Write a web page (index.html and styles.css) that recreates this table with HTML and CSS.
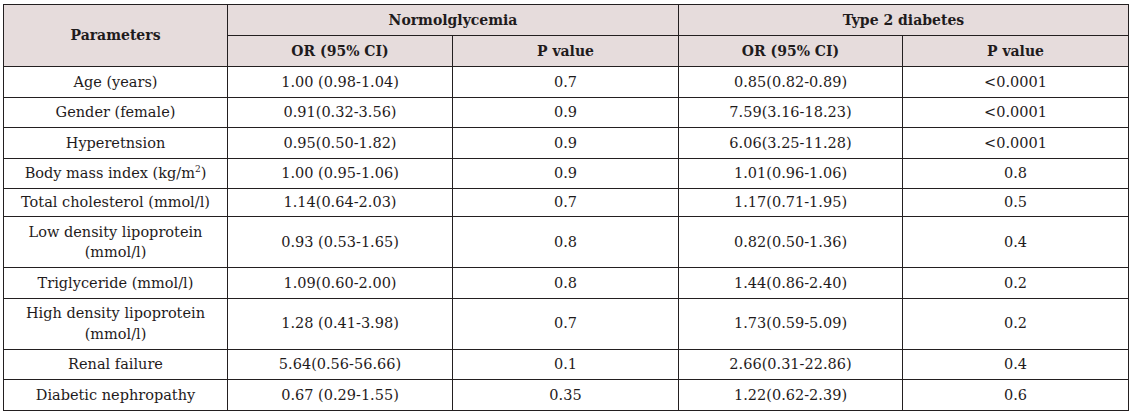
FILE: index.html
```html
<!DOCTYPE html>
<html lang="en">
<head>
<meta charset="utf-8">
<title>Odds ratios</title>
<link rel="stylesheet" href="styles.css">
</head>
<body>
<table class="data">
  <colgroup>
    <col class="c1"><col class="c2"><col class="c3"><col class="c4"><col class="c5">
  </colgroup>
  <thead>
    <tr class="h1">
      <th rowspan="2">Parameters</th>
      <th colspan="2">Normolglycemia</th>
      <th colspan="2">Type 2 diabetes</th>
    </tr>
    <tr class="h2">
      <th>OR (95% CI)</th>
      <th>P value</th>
      <th>OR (95% CI)</th>
      <th>P value</th>
    </tr>
  </thead>
  <tbody>
    <tr><td>Age (years)</td><td>1.00 (0.98-1.04)</td><td>0.7</td><td>0.85(0.82-0.89)</td><td>&lt;0.0001</td></tr>
    <tr><td>Gender (female)</td><td>0.91(0.32-3.56)</td><td>0.9</td><td>7.59(3.16-18.23)</td><td>&lt;0.0001</td></tr>
    <tr><td>Hyperetnsion</td><td>0.95(0.50-1.82)</td><td>0.9</td><td>6.06(3.25-11.28)</td><td>&lt;0.0001</td></tr>
    <tr><td>Body mass index (kg/m<sup>2</sup>)</td><td>1.00 (0.95-1.06)</td><td>0.9</td><td>1.01(0.96-1.06)</td><td>0.8</td></tr>
    <tr class="tight"><td>Total cholesterol (mmol/l)</td><td>1.14(0.64-2.03)</td><td>0.7</td><td>1.17(0.71-1.95)</td><td>0.5</td></tr>
    <tr><td>Low density lipoprotein<br>(mmol/l)</td><td>0.93 (0.53-1.65)</td><td>0.8</td><td>0.82(0.50-1.36)</td><td>0.4</td></tr>
    <tr><td>Triglyceride (mmol/l)</td><td>1.09(0.60-2.00)</td><td>0.8</td><td>1.44(0.86-2.40)</td><td>0.2</td></tr>
    <tr><td>High density lipoprotein<br>(mmol/l)</td><td>1.28 (0.41-3.98)</td><td>0.7</td><td>1.73(0.59-5.09)</td><td>0.2</td></tr>
    <tr><td>Renal failure</td><td>5.64(0.56-56.66)</td><td>0.1</td><td>2.66(0.31-22.86)</td><td>0.4</td></tr>
    <tr><td>Diabetic nephropathy</td><td>0.67 (0.29-1.55)</td><td>0.35</td><td>1.22(0.62-2.39)</td><td>0.6</td></tr>
  </tbody>
</table>
</body>
</html>
```

FILE: styles.css
```css
html, body {
  margin: 0;
  padding: 0;
  background: #ffffff;
}

body {
  padding: 4px 0 0 3px;
  font-family: "DejaVu Serif", "Liberation Serif", serif;
  color: #1f1b1c;
}

.data {
  border-collapse: collapse;
  table-layout: fixed;
  width: 1126px;
  font-size: 14px;
}

.c1 { width: 224px; }
.c2 { width: 225px; }
.c3 { width: 226px; }
.c4 { width: 224px; }
.c5 { width: 226px; }

.data th,
.data td {
  border: 1px solid #231f20;
  text-align: center;
  vertical-align: middle;
  padding: 4.5px 8px;
  line-height: 20.5px;
}

.data thead th {
  background: #e6dcdc;
  font-weight: bold;
  padding: 4.5px 8px 5px;
}

.data tbody td {
  font-weight: normal;
  font-size: 14.5px;
}

.data sup {
  font-size: 9px;
  line-height: 0;
  vertical-align: 6px;
}

.data tr.tight td {
  padding-top: 3.25px;
  padding-bottom: 3.25px;
}
```
